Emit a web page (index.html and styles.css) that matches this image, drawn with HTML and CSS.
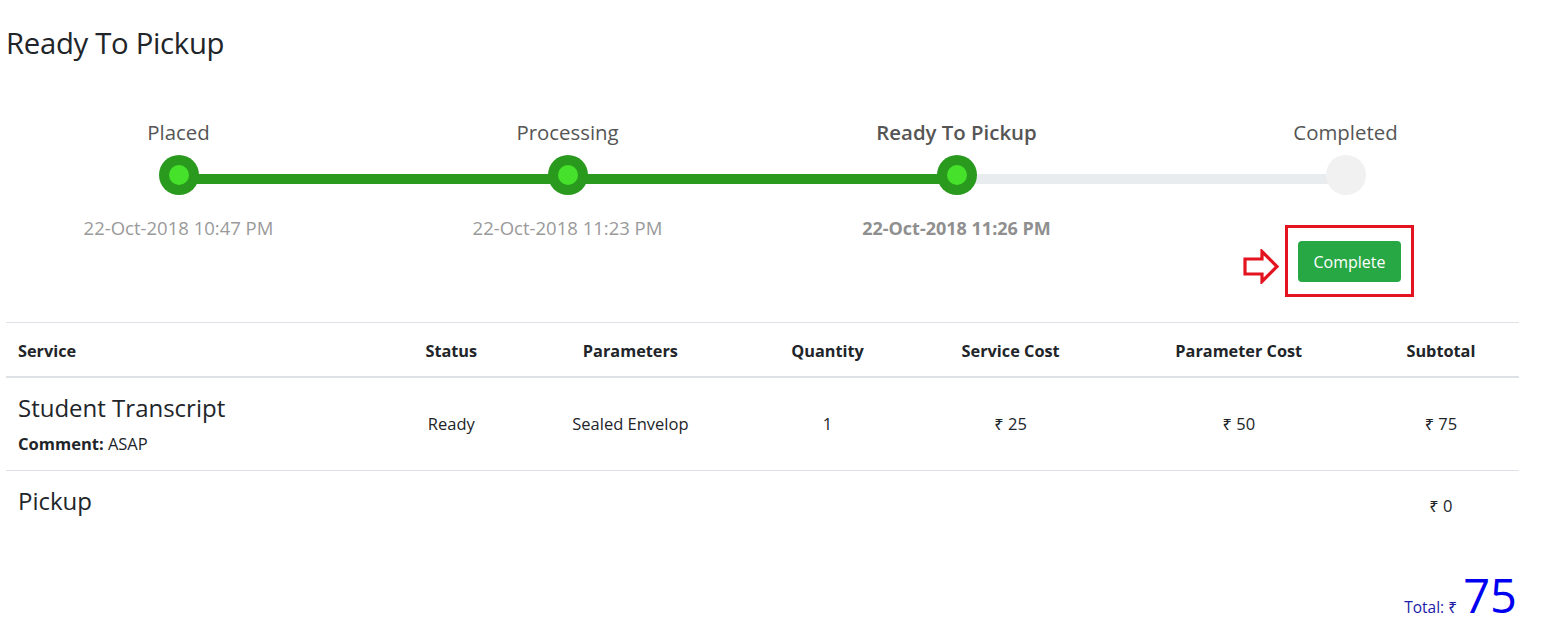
FILE: index.html
```html
<!DOCTYPE html>
<html lang="en">
<head>
<meta charset="utf-8">
<title>Ready To Pickup</title>
<link rel="stylesheet" href="styles.css">
</head>
<body>
<div class="page">
  <h3 class="title">Ready To Pickup</h3>

  <div class="steps">
    <div class="step done">
      <div class="step-label">Placed</div>
      <div class="dot"></div>
      <div class="step-date">22-Oct-2018 10:47 PM</div>
    </div>
    <div class="step done">
      <div class="step-label">Processing</div>
      <div class="dot"></div>
      <div class="step-date">22-Oct-2018 11:23 PM</div>
    </div>
    <div class="step done current">
      <div class="step-label">Ready To Pickup</div>
      <div class="dot"></div>
      <div class="step-date">22-Oct-2018 11:26 PM</div>
    </div>
    <div class="step todo">
      <div class="step-label">Completed</div>
      <div class="dot"></div>
      <div class="action">
        <svg class="arrow" width="37" height="35" viewBox="0 0 37 35" aria-hidden="true">
          <polygon points="2,10 19,10 19,2.5 34,17.5 19,32.5 19,25 2,25" fill="#fff" stroke="#e3141f" stroke-width="3.2" stroke-linejoin="miter"/>
        </svg>
        <div class="highlight">
          <button class="btn-complete" type="button">Complete</button>
        </div>
      </div>
    </div>
  </div>

  <table class="items">
    <colgroup>
      <col class="c-service">
      <col class="c-status">
      <col class="c-params">
      <col class="c-qty">
      <col class="c-scost">
      <col class="c-pcost">
      <col class="c-sub">
    </colgroup>
    <thead>
      <tr>
        <th class="left">Service</th>
        <th>Status</th>
        <th>Parameters</th>
        <th>Quantity</th>
        <th>Service Cost</th>
        <th>Parameter Cost</th>
        <th>Subtotal</th>
      </tr>
    </thead>
    <tbody>
      <tr class="row-item">
        <td class="left">
          <h4 class="svc-name">Student Transcript</h4>
          <div class="comment"><b>Comment:</b> ASAP</div>
        </td>
        <td>Ready</td>
        <td>Sealed Envelop</td>
        <td>1</td>
        <td>₹ 25</td>
        <td>₹ 50</td>
        <td>₹ 75</td>
      </tr>
      <tr class="row-pickup">
        <td class="left"><h4 class="svc-name pickup">Pickup</h4></td>
        <td></td>
        <td></td>
        <td></td>
        <td></td>
        <td></td>
        <td>₹ 0</td>
      </tr>
    </tbody>
  </table>

  <div class="total">
    <span class="total-label">Total: ₹</span>
    <span class="total-value">75</span>
  </div>
</div>
</body>
</html>
```

FILE: styles.css
```css
* { box-sizing: border-box; }

html, body {
  margin: 0;
  padding: 0;
  background: #fff;
}

body {
  font-family: "Open Sans", "Noto Sans", "DejaVu Sans", sans-serif;
  color: #212529;
  font-size: 16px;
}

.page {
  padding: 0 31px 0 6px;
  width: 1550px;
}

.title {
  margin: 25px 0 0 0;
  font-size: 29.3px;
  line-height: 36px;
  font-weight: 400;
  color: #212529;
  letter-spacing: -0.3px;
}

/* ---------- stepper ---------- */
.steps {
  display: grid;
  grid-template-columns: repeat(4, 389px);
  margin: 57px 0 0 -22px;
}

.step {
  position: relative;
  display: flex;
  flex-direction: column;
  align-items: center;
}

.step + .step::before {
  content: "";
  position: absolute;
  top: 56px;
  left: -50%;
  width: 100%;
  height: 10px;
  background: #2a9a1f;
  z-index: 0;
}

.step.todo::before {
  background: #e9ecef;
}

.step-label {
  font-size: 20.4px;
  line-height: 28px;
  color: #555;
}

.current .step-label {
  font-weight: 600;
}

.dot {
  position: relative;
  z-index: 1;
  width: 40px;
  height: 40px;
  margin-top: 9px;
  border-radius: 50%;
  background: #2a9a1f;
  display: flex;
  align-items: center;
  justify-content: center;
}

.done .dot::after {
  content: "";
  width: 20px;
  height: 20px;
  border-radius: 50%;
  background: #46e12b;
}

.todo .dot {
  background: #f1f1f1;
}

.step-date {
  margin-top: 20px;
  font-size: 18.5px;
  line-height: 26px;
  color: #9a9a9a;
}

.current .step-date {
  font-weight: 700;
  font-size: 18px;
  color: #8f8f8f;
}

.action {
  position: relative;
  margin: 30px 0 0 8px;
}

.arrow {
  position: absolute;
  left: -42px;
  top: 24px;
}

.highlight {
  border: 3px solid #e3141f;
  padding: 13px 10px 12px;
}

.btn-complete {
  display: block;
  width: 103px;
  height: 41px;
  border: 0;
  border-radius: 4px;
  background: #28a745;
  color: #fff;
  font-family: "Open Sans", "Noto Sans", sans-serif;
  font-size: 16px;
  padding: 0;
  cursor: pointer;
}

/* ---------- table ---------- */
.items {
  width: 100%;
  margin-top: 25px;
  border-collapse: collapse;
  table-layout: fixed;
}

.c-service { width: 384px; }
.c-status  { width: 122px; }
.c-params  { width: 236px; }
.c-qty     { width: 158px; }
.c-scost   { width: 208px; }
.c-pcost   { width: 248px; }
.c-sub     { width: 156px; }

.items th {
  border-top: 1px solid #dee2e6;
  border-bottom: 2px solid #dee2e6;
  padding: 16px 12px 13px;
  font-size: 16.3px;
  line-height: 24px;
  font-weight: 700;
  text-align: center;
  color: #212529;
}

.items td {
  padding: 15px 12px;
  font-size: 16.5px;
  line-height: 22px;
  text-align: center;
  vertical-align: middle;
  color: #212529;
}

.items .left {
  text-align: left;
}

.row-item td {
  border-bottom: 1px solid #dee2e6;
}

.svc-name {
  margin: 0;
  font-size: 24px;
  line-height: 30px;
  font-weight: 400;
}

.svc-name.pickup {
  margin-bottom: 10px;
}

.comment {
  margin-top: 10px;
  font-size: 16.5px;
  line-height: 22px;
}

/* ---------- total ---------- */
.total {
  margin-top: 26px;
  text-align: right;
  line-height: 56px;
  padding-right: 2px;
}

.total-label {
  font-size: 15.5px;
  color: #2020a8;
}

.total-value {
  font-size: 47px;
  color: #0000f0;
  margin-left: 2px;
}
```
